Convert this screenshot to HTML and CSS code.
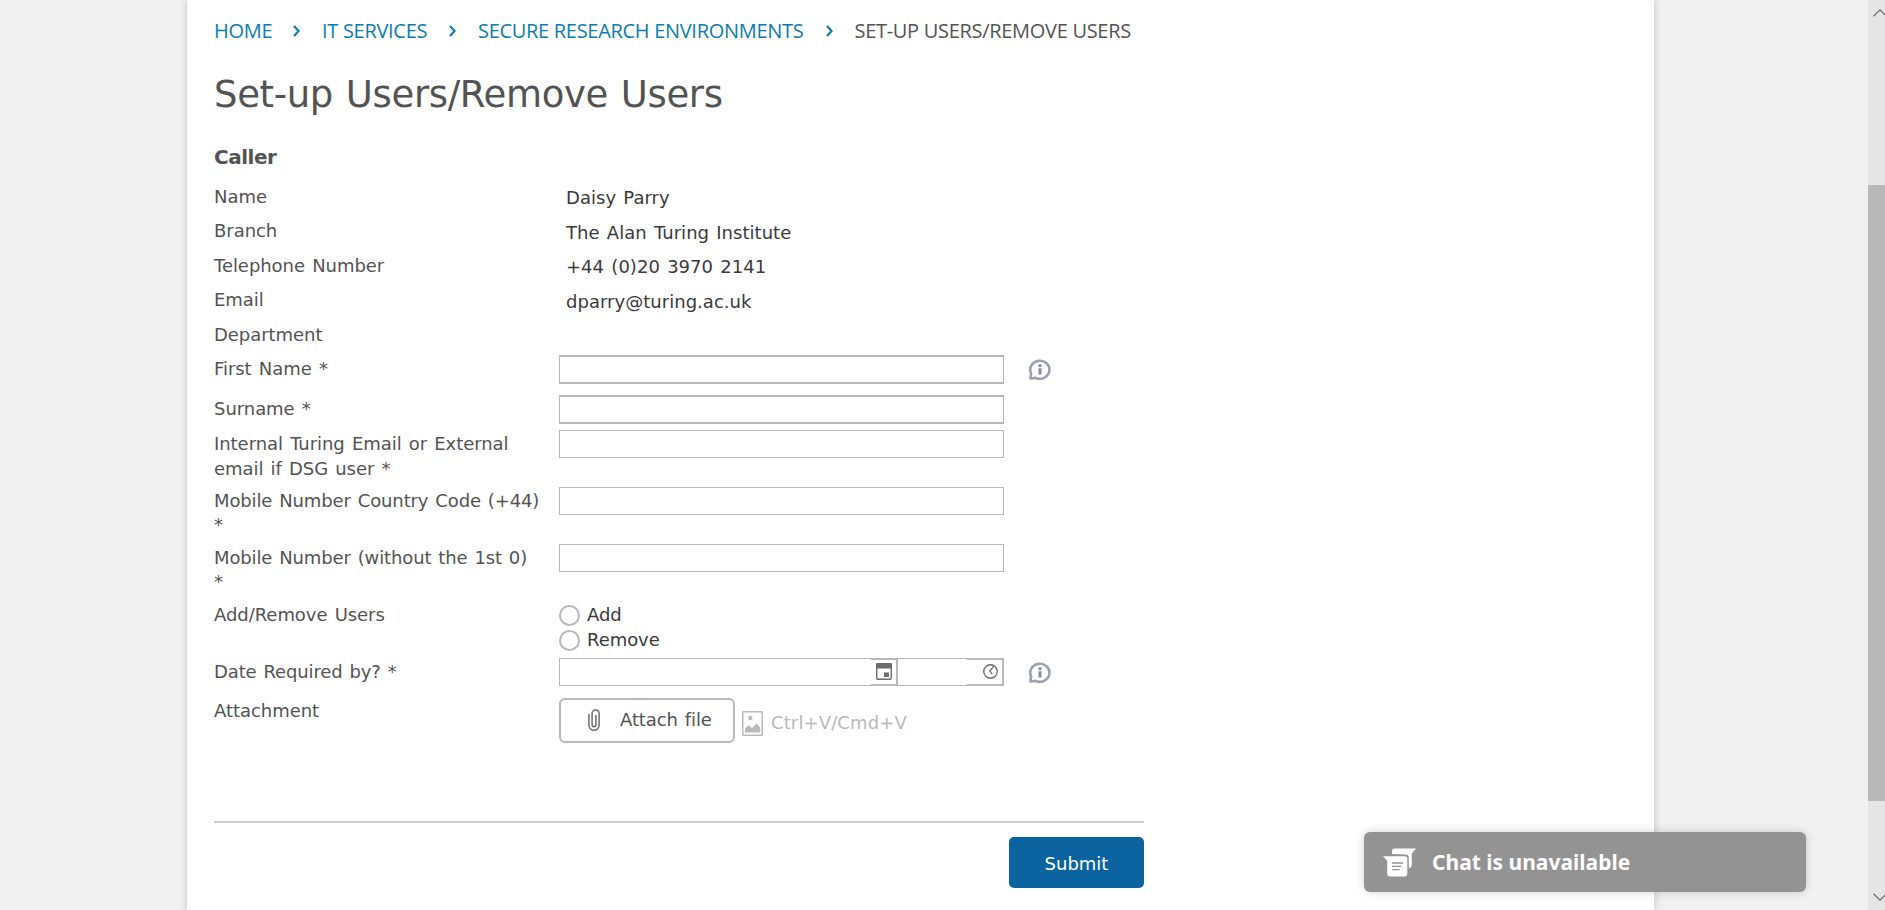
FILE: index.html
```html
<!DOCTYPE html>
<html lang="en">
<head>
<meta charset="utf-8">
<title>Set-up Users/Remove Users</title>
<link rel="stylesheet" href="styles.css">
</head>
<body>
<svg width="0" height="0" class="defs">
  <symbol id="chev" viewBox="0 0 7 12"><path d="M1 1l4.6 5L1 11" fill="none" stroke="currentColor" stroke-width="2.200"/></symbol>
  <symbol id="info" viewBox="0 0 22 21"><path d="M1.4 19.500L2.100 14.500A9.600 9 0 1 1 6.500 18.800Q4 19.600 1.400 19.500Z" fill="none" stroke="#9ba1b2" stroke-width="2.600" stroke-linejoin="round"/><path d="M9.500 5.200h3v2.800h-3zM9.500 9.300h3v6.200h-3z" fill="#858b9d"/></symbol>
</svg>
<main class="page">
  <nav class="crumbs">
    <a class="c-home">HOME</a><svg class="chev"><use href="#chev"/></svg>
    <a class="c-it">IT SERVICES</a><svg class="chev"><use href="#chev"/></svg>
    <a class="c-sec">SECURE RESEARCH ENVIRONMENTS</a><svg class="chev"><use href="#chev"/></svg>
    <span>SET-UP USERS/REMOVE USERS</span>
  </nav>
  <h1>Set-up Users/Remove Users</h1>
  <h2>Caller</h2>
  <form class="form">
    <div class="row"><label>Name</label><div class="value">Daisy Parry</div></div>
    <div class="row"><label>Branch</label><div class="value">The Alan Turing Institute</div></div>
    <div class="row"><label>Telephone Number</label><div class="value">+44 (0)20 3970 2141</div></div>
    <div class="row"><label>Email</label><div class="value">dparry@turing.ac.uk</div></div>
    <div class="row"><label>Department</label></div>
    <div class="row first"><label>First Name *</label><div class="box thick"></div><svg class="info"><use href="#info"/></svg></div>
    <div class="row surname"><label>Surname *</label><div class="box thick"></div></div>
    <div class="row tall"><label>Internal Turing Email or External<br>email if DSG user *</label><div class="box"></div></div>
    <div class="row tall"><label class="snug">Mobile Number Country Code (+44)<span class="star">*</span></label><div class="box"></div></div>
    <div class="row tall"><label class="snug">Mobile Number (without the 1st 0)<span class="star">*</span></label><div class="box"></div></div>
    <div class="row tall"><label>Add/Remove Users</label>
      <div class="radios"><div class="radio"><i></i>Add</div><div class="radio"><i></i>Remove</div></div>
    </div>
    <div class="row date"><label class="snug">Date Required by? *</label>
      <div class="box split">
        <div class="picker cal"><svg width="16" height="17" viewBox="0 0 16 17"><rect x=".75" y=".75" width="14.500" height="15.500" rx="1.200" fill="#fff" stroke="#6b6b6b" stroke-width="1.400"/><path d="M0 1.500Q0 0 1.500 0h13Q16 0 16 1.500V5.500H0zM8 9.500h5v4.500H8z" fill="#6b6b6b"/></svg></div>
        <div class="picker clock"><svg width="15" height="15" viewBox="0 0 16 16" fill="none" stroke="#6b6b6b" stroke-width="1.400"><circle cx="8" cy="8" r="7.200"/><path d="M11.300 2.500L7.300 7.500l2.300 3.200"/></svg></div>
      </div><svg class="info"><use href="#info"/></svg>
    </div>
    <div class="row attach"><label>Attachment</label>
      <div class="btn"><svg width="12" height="22" viewBox="0 0 12 22" fill="none" stroke="#6b6b6b" stroke-width="1.500"><path d="M.9 5v11.200a5.100 5.100 0 0 0 10.200 0V4.400a3.500 3.500 0 0 0-7 0v11.400a1.900 1.900 0 0 0 3.800 0V6"/></svg><span>Attach file</span></div>
      <svg class="pic" width="21" height="25" viewBox="0 0 21 25"><rect x=".75" y=".75" width="19.500" height="23.500" rx=".6" fill="#fff" stroke="#b9b9b9" stroke-width="1.500"/><circle cx="8.300" cy="7" r="2.200" fill="#b9b9b9"/><path d="M3 21.500v-4L6.500 14l3.500 3L14.500 12.500l3.700 4v5z" fill="#b9b9b9"/></svg>
      <span class="hint">Ctrl+V/Cmd+V</span>
    </div>
  </form>
  <footer class="foot"><button class="submit" type="button">Submit</button></footer>
</main>
<aside class="chat">
  <svg width="33" height="29" viewBox="0 0 33 29"><path d="M9 6V3Q9 .4 11.600 .4H33L28.800 5.200V16.500Q28.800 20 25.800 20V10Q25.800 6.600 22.600 6.600z" fill="#fff"/><path d="M0 8.200H21.500Q24.300 8.200 24.300 11V25.500Q24.300 28.500 21.500 28.500H7.200Q4.200 28.500 4.200 25.500V13z" fill="#fff"/><path d="M9 15h11M9 18.300h9M9 21.600h7.500" stroke="#939393" stroke-width="1.300"/></svg>
  <span>Chat is unavailable</span>
</aside>
<div class="scrollbar"><svg class="up" width="14" height="8" viewBox="0 0 14 8"><path d="M.6 7.200L7 .9l6.400 6.300"/></svg><div class="thumb"></div><svg class="down" width="14" height="8" viewBox="0 0 14 8"><path d="M.6 .8L7 7.100 13.400 .8"/></svg></div>
</body>
</html>
```
FILE: styles.css
```css
* { box-sizing: border-box; }
html, body { height: 100%; overflow: hidden; }
body { margin: 0; background: #f1f1f1; font-family: Verdana, "DejaVu Sans", sans-serif; font-size: 18px; line-height: 25px; color: #535353; }
svg { display: block; flex: none; }
.defs { position: absolute; }
.page { width: 1467px; height: 910px; margin-left: 187px; padding: 18px 0 0 27px; background: #fff; box-shadow: 0 0 8px rgba(0,0,0,.2); }
.crumbs { display: flex; align-items: center; height: 26px; font: 20px/26px "Open Sans", sans-serif; color: #535353; white-space: nowrap; letter-spacing: -.3px; }
.crumbs a, .chev { color: #0b7cb0; }
.chev { width: 7px; height: 12px; }
.c-home { width: 79px; }
.chev + a, .chev + span { margin-left: 22px; }
.c-it { width: 127px; }
.c-sec { width: 347.5px; }
h1 { margin: 26px 0 0; font-size: 37px; line-height: 50px; font-weight: 400; white-space: nowrap; letter-spacing: -.35px; word-spacing: 1.5px; }
h2 { margin: 25px 0 0; font-size: 20px; line-height: 25px; font-weight: 700; letter-spacing: -.5px; }
.form { margin-top: 14px; }
.row { display: flex; align-items: flex-start; height: 34.4px; white-space: nowrap; letter-spacing: -.05px; word-spacing: 1.5px; }
label { width: 345px; flex: none; }
.snug { letter-spacing: -.12px; word-spacing: 1.300px; }
.star { display: block; margin-top: -1px; }
.value { padding: 1.4px 0 0 7px; color: #3a3a3a; letter-spacing: .03px; }
.row.first { height: 40px; }
.row.surname { height: 35px; }
.row.tall { height: 57px; }
.row.date { height: 39px; }
.box { width: 445px; height: 28px; margin-top: -1px; border: 1px solid #b9b9b9; background: #fff; flex: none; }
.box.thick { height: 29px; border-width: 2px 1px; }
.info { width: 22px; height: 21px; margin: 3px 0 0 25px; }
.radio { display: flex; align-items: flex-start; height: 25px; color: #3a3a3a; }
.radio i { width: 21px; height: 21px; margin: 3px 7px 0 0; border: 2px solid #b9b9b9; border-radius: 50%; }
.split { display: flex; justify-content: space-between; }
.picker { height: 26px; border: solid #b9b9b9; border-width: 1px 1px 1px 0; display: flex; align-items: center; }
.cal { width: 27px; margin-left: 311px; padding-left: 5px; border-right-width: 2px; }
.clock { width: 36px; padding-left: 16px; }
.btn { display: flex; align-items: center; width: 176px; height: 45px; padding-left: 27px; border: 2px solid #b9b9b9; border-radius: 6px; letter-spacing: -.12px; }
.btn span { margin-left: 20px; margin-top: -2px; }
.pic { margin: 13px 0 0 7px; }
.hint { margin: 12px 0 0 8px; color: #b9b9b9; letter-spacing: .12px; }
.attach { height: 123px; }
.foot { width: 930px; border-top: 2px solid #cecece; padding-top: 14px; display: flex; justify-content: flex-end; }
.submit { width: 135px; height: 51px; padding: 2px 0 0; border: 0; border-radius: 5px; background: #0b64a0; color: #fff; font: inherit; }
.chat { position: absolute; left: 1364px; top: 832px; width: 442px; height: 60px; padding-left: 19px; display: flex; align-items: center; gap: 16px; border-radius: 6px; background: #939393; color: #fff; box-shadow: 0 0 10px rgba(0,0,0,.18); font: 700 21px/27px "Noto Sans", sans-serif; white-space: nowrap; }
.scrollbar { position: absolute; right: 0; top: 0; width: 17px; height: 910px; overflow: hidden; background: #e5e5e5; display: flex; flex-direction: column; }
.scrollbar svg { margin-left: 5px; fill: none; stroke: #6b6b6b; stroke-width: 1.200; }
.up { margin-top: 9px; }
.thumb { height: 616px; margin-top: 168px; background: #b9b9b9; }
.down { margin-top: 92px; }
```
